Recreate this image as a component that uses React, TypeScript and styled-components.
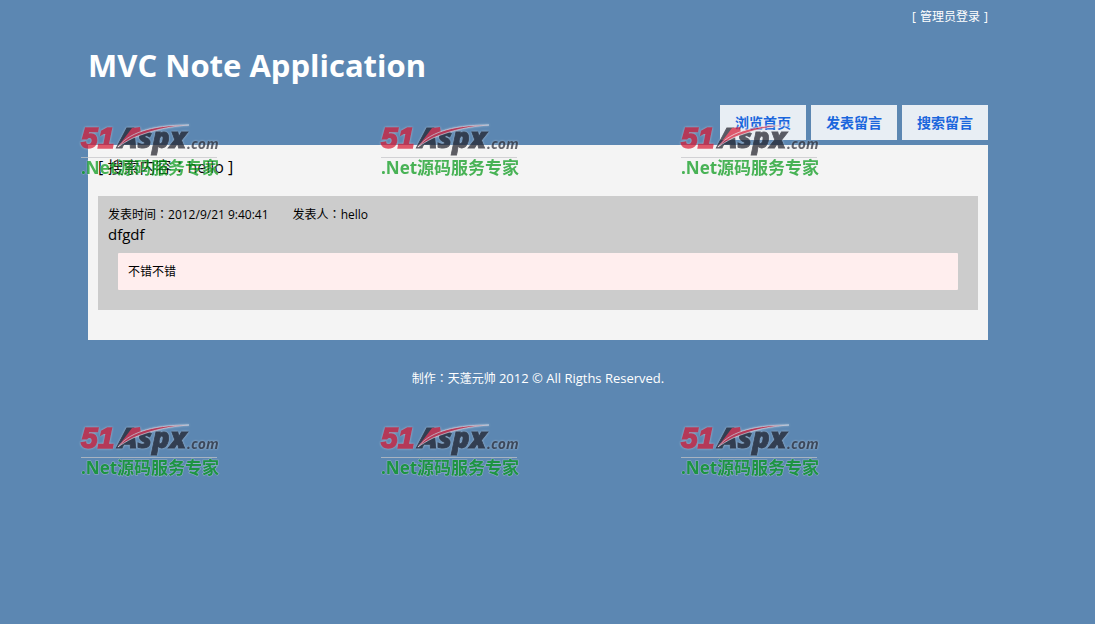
import React from "react";
import styled, { createGlobalStyle } from "styled-components";

const GlobalStyle = createGlobalStyle`
  * { box-sizing: border-box; }
  body {
    margin: 0;
    background: #5c87b2;
    color: #000;
    font: 12px/18px "Open Sans", "Noto Sans CJK SC", sans-serif;
  }
`;

const Page = styled.div`
  position: relative;
  min-height: 100vh;
  padding-right: 19px;
  overflow: hidden;
`;

const Container = styled.div`
  max-width: 900px;
  margin: 0 auto;
`;

const LoginBar = styled.div`
  display: flex;
  justify-content: flex-end;
  gap: 4px;
  padding-top: 8px;
  color: #fff;
`;

const LoginLink = styled.a`
  color: #fff;
  text-decoration: none;
`;

const Title = styled.h1`
  margin: 16px 0;
  font-size: 31px;
  line-height: 46px;
  font-weight: 700;
  color: #fff;
`;

const Menu = styled.nav`
  display: flex;
  justify-content: flex-end;
  gap: 5px;
  padding: 1px 0 5px;
`;

const MenuLink = styled.a`
  padding: 8px 15px 7px;
  font-size: 14px;
  line-height: 20px;
  font-weight: 700;
  color: #1a66dd;
  background: #e8eef4;
  text-decoration: none;
`;

const Main = styled.main`
  padding: 10px 10px 30px;
  background: #f4f4f4;
`;

const SearchTerm = styled.p`
  margin: 0 0 18px;
  font-size: 16px;
  line-height: 22px;
`;

const Note = styled.article`
  padding: 9px 10px 20px;
  background: #ccc;
`;

const NoteMeta = styled.div`
  display: flex;
  gap: 24px;
  line-height: 18px;
`;

const NoteBody = styled.div`
  font-size: 15px;
  line-height: 20px;
`;

const Reply = styled.div`
  margin: 9px 10px 0;
  padding: 10px 10px 9px;
  border-radius: 1px;
  background: #fee;
`;

const Colon = styled.span`
  font-family: "Noto Sans CJK TC", sans-serif;
`;

const Footer = styled.footer`
  padding-top: 29px;
  text-align: center;
  color: #fff;
`;

const Copyright = styled.span`
  font-size: 13px;
`;

const Watermarks = styled.div`
  position: absolute;
  top: 120px;
  left: 80px;
  display: grid;
  grid-template-columns: repeat(3, 300px);
  grid-auto-rows: 300px;
  opacity: 0.72;
  pointer-events: none;
`;

const LogoDrawing = styled.svg`
  display: block;
  overflow: visible;
  font-family: "Open Sans", "Noto Sans CJK SC", sans-serif;
  font-weight: 700;
`;

const Wordmark = styled.g`
  font-style: italic;
  filter: drop-shadow(0 0 1px rgba(244, 244, 244, 0.7));
`;

const Slogan = styled.text`
  font-size: 17px;
  fill: #069a18;
  paint-order: stroke;
  stroke: rgba(244, 244, 244, 0.5);
  stroke-width: 1px;
`;

const Logo = () => (
  <LogoDrawing width="142" height="60" viewBox="0 0 142 60" aria-hidden="true">
    <Wordmark>
      <text x="1" y="28" fontSize="30" fontFamily="Liberation Sans, sans-serif" fill="#d81c36" stroke="#d81c36" strokeWidth="1.6">51</text>
      <text x="38" y="28" fontSize="29" fontWeight="800" fill="#22222c" stroke="#22222c" strokeWidth="0.8">Aspx</text>
      <text x="107" y="29" fontSize="14" fill="#30303a">.com</text>
      <path d="M37 28L52 8L60 7L61 13C51 17 43 22 37 28Z" fill="#d81c36" />
      <path d="M38 27C48 14 69 5 109 5C82 7 65 13 53 18C47 21 42 24 38 27Z" fill="#d81c36" stroke="#f4f4f4" strokeWidth="0.7" />
    </Wordmark>
    <path d="M1 37.500H137" stroke="#c4c4c8" />
    <Slogan x="1" y="54">.Net源码服务专家</Slogan>
  </LogoDrawing>
);

const menu = ["浏览首页", "发表留言", "搜索留言"];

export default function App() {
  return (
    <Page>
      <GlobalStyle />
      <Container>
        <LoginBar>
          <span>[</span>
          <LoginLink href="#login">管理员登录</LoginLink>
          <span>]</span>
        </LoginBar>
        <Title>MVC Note Application</Title>
        <Menu>
          {menu.map((label) => (
            <MenuLink key={label} href="#">{label}</MenuLink>
          ))}
        </Menu>
        <Main>
          <SearchTerm>[ 搜索内容<Colon>：</Colon>hello ]</SearchTerm>
          <Note>
            <NoteMeta>
              <span>发表时间<Colon>：</Colon>2012/9/21 9:40:41</span>
              <span>发表人<Colon>：</Colon>hello</span>
            </NoteMeta>
            <NoteBody>dfgdf</NoteBody>
            <Reply>不错不错</Reply>
          </Note>
        </Main>
        <Footer>
          制作<Colon>：</Colon>天蓬元帅 <Copyright>2012 © All Rigths Reserved.</Copyright>
        </Footer>
      </Container>
      <Watermarks>
        {Array.from({ length: 6 }, (_, index) => (
          <Logo key={index} />
        ))}
      </Watermarks>
    </Page>
  );
}
